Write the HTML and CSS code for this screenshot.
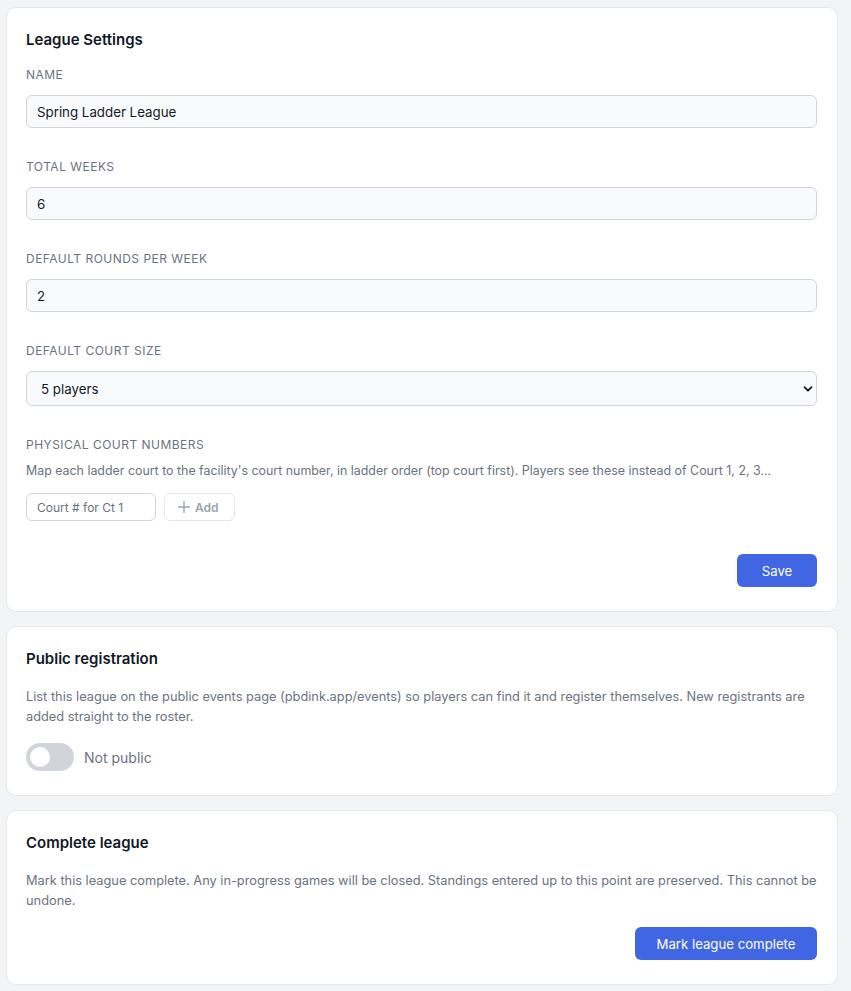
FILE: index.html
```html
<!DOCTYPE html>
<html lang="en">
<head>
<meta charset="utf-8">
<title>League Settings</title>
<link rel="stylesheet" href="styles.css">
</head>
<body>
<div class="page">
  <section class="card">
    <h2 class="card-title">League Settings</h2>
    <div class="field">
      <label class="label">Name</label>
      <input class="input" type="text" value="Spring Ladder League">
    </div>
    <div class="field">
      <label class="label">Total weeks</label>
      <input class="input" type="text" value="6">
    </div>
    <div class="field">
      <label class="label">Default rounds per week</label>
      <input class="input" type="text" value="2">
    </div>
    <div class="field">
      <label class="label">Default court size</label>
      <div class="select-wrap">
        <select class="select"><option>5 players</option></select>
        <svg class="chevron" width="10" height="10" viewBox="0 0 10 10"><path d="M1.5 3.2 L5 6.7 L8.5 3.2" fill="none" stroke="#111827" stroke-width="1.8" stroke-linecap="round" stroke-linejoin="round"/></svg>
      </div>
    </div>
    <div class="field-last">
      <label class="label">Physical court numbers</label>
      <p class="hint">Map each ladder court to the facility's court number, in ladder order (top court first). Players see these instead of Court 1, 2, 3…</p>
      <div class="court-row">
        <input class="court-input" type="text" placeholder="Court # for Ct 1">
        <button class="add-btn" type="button"><svg width="14" height="14" viewBox="0 0 14 14"><path d="M7 1 V13 M1 7 H13" stroke="#9ca3af" stroke-width="1.3" fill="none"/></svg>Add</button>
      </div>
    </div>
    <div class="actions actions-save">
      <button class="btn-primary btn-save" type="button">Save</button>
    </div>
  </section>

  <section class="card">
    <h2 class="card-title">Public registration</h2>
    <p class="desc">List this league on the public events page (pbdink.app/events) so players can find it and register themselves. New registrants are added straight to the roster.</p>
    <div class="toggle-row">
      <span class="toggle"><span class="knob"></span></span>
      <span class="toggle-label">Not public</span>
    </div>
  </section>

  <section class="card">
    <h2 class="card-title">Complete league</h2>
    <p class="desc">Mark this league complete. Any in-progress games will be closed. Standings entered up to this point are preserved. This cannot be undone.</p>
    <div class="actions">
      <button class="btn-primary btn-complete" type="button">Mark league complete</button>
    </div>
  </section>
</div>
</body>
</html>
```

FILE: styles.css
```css
* { box-sizing: border-box; }
html, body { margin: 0; padding: 0; }
body {
  background: #f3f4f6;
  font-family: Inter, "Noto Sans", sans-serif;
  color: #111827;
}
.page {
  padding: 7px 0 0 6px;
  width: 838px;
  display: flex;
  flex-direction: column;
  gap: 14px;
}
.card {
  background: #ffffff;
  border: 1px solid #e5e7eb;
  border-radius: 10px;
  padding: 20px 20px 24px 19px;
}
.card-title {
  margin: 0 0 16px;
  font-size: 15px;
  line-height: 24px;
  font-weight: 600;
  color: #111827;
}
.card:first-child .card-title { margin-bottom: 15px; }
.field { margin-bottom: 31px; }
.label {
  display: block;
  font-size: 12px;
  line-height: 16px;
  text-transform: uppercase;
  letter-spacing: 0.04em;
  color: #6b7280;
  margin-bottom: 12px;
}
.input, .select {
  display: block;
  width: 100%;
  height: 33px;
  border: 1px solid #d1d5db;
  border-radius: 6px;
  background: #f9fafb;
  padding: 0 10px;
  font-family: inherit;
  font-size: 13.3px;
  color: #111827;
  outline: none;
}
.select-wrap { position: relative; }
.select {
  height: 35px;
  padding: 0 14px;
  -webkit-appearance: none;
  appearance: none;
}
.chevron {
  position: absolute;
  right: 4px;
  top: 13px;
  pointer-events: none;
}
.field-last .label { margin-bottom: 10px; }
.hint {
  margin: 0 0 14px;
  font-size: 12.4px;
  line-height: 16px;
  color: #6b7280;
}
.court-row {
  display: flex;
  gap: 8px;
}
.court-input {
  width: 130px;
  height: 28px;
  border: 1px solid #d1d5db;
  border-radius: 6px;
  background: #ffffff;
  padding: 0 10px;
  font-family: inherit;
  font-size: 12px;
  color: #111827;
  outline: none;
}
.court-input::placeholder { color: #6b7280; }
.add-btn {
  display: flex;
  align-items: center;
  gap: 4px;
  height: 28px;
  width: 71px;
  padding: 0 0 0 12px;
  border: 1px solid #e5e7eb;
  border-radius: 6px;
  background: #ffffff;
  font-family: inherit;
  font-size: 12px;
  font-weight: 600;
  color: #9ca3af;
}
.actions {
  display: flex;
  justify-content: flex-end;
}
.actions-save { margin-top: 33px; }
.btn-primary {
  height: 33px;
  border: none;
  border-radius: 6px;
  background: #4166e3;
  color: #ffffff;
  font-family: inherit;
  font-size: 13.2px;
  font-weight: 400;
}
.btn-save { width: 80px; }
.btn-complete { width: 182px; }
.desc {
  margin: 0 0 16px;
  font-size: 12.8px;
  line-height: 20px;
  color: #6b7280;
}
.toggle-row {
  display: flex;
  align-items: center;
  gap: 10px;
}
.toggle {
  position: relative;
  width: 48px;
  height: 28px;
  border-radius: 14px;
  background: #d1d5db;
}
.knob {
  position: absolute;
  left: 4px;
  top: 4px;
  width: 20px;
  height: 20px;
  border-radius: 50%;
  background: #ffffff;
}
.toggle-label {
  font-size: 14px;
  color: #6b7280;
}
```
